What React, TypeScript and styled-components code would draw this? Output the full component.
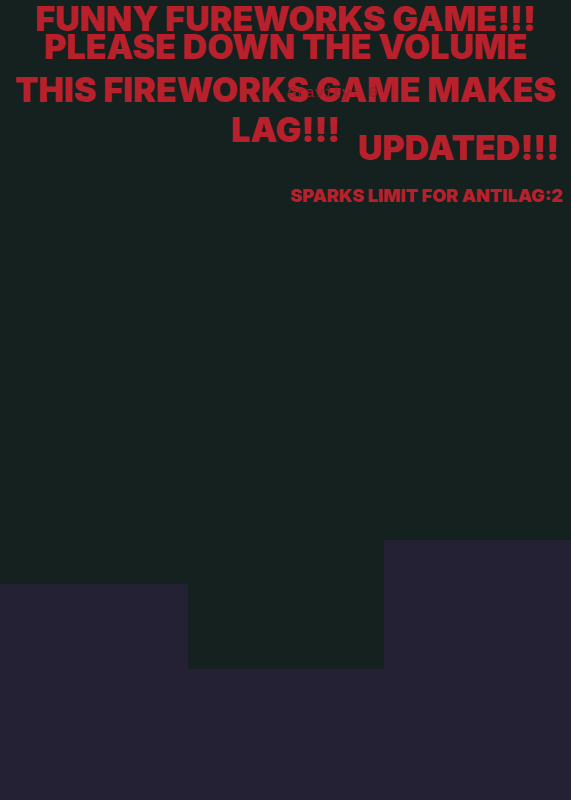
import React from "react";
import styled, { createGlobalStyle } from "styled-components";

const GlobalStyle = createGlobalStyle`
  *, *::before, *::after { box-sizing: border-box; }
  body { margin: 0; background: #15211f; }
`;

const Scene = styled.main`
  display: flex;
  flex-direction: column;
  min-height: 100vh;
  overflow: hidden;
  background: #15211f;
  color: #b8202b;
  font-family: Inter, "Liberation Sans", sans-serif;
  font-weight: 900;
`;

const Messages = styled.header`
  position: relative;
  display: flex;
  flex-direction: column;
  padding-top: 5px;
`;

const Heading = styled.h1`
  margin: 0;
  font-size: 34px;
  font-weight: 900;
  line-height: 28px;
  text-align: center;
`;

const Warning = styled.p`
  margin: 9px 0 0;
  font-size: 34px;
  line-height: 40px;
  text-align: center;
`;

const Updated = styled.p`
  margin: -16px 12px 0 0;
  font-size: 34px;
  line-height: 28px;
  text-align: right;
`;

const SparksLimit = styled.p`
  margin: 24px 8px 0 0;
  font-size: 18px;
  line-height: 20px;
  text-align: right;
`;

const Gravity = styled.output`
  position: absolute;
  top: 85px;
  left: 50%;
  padding-left: 2px;
  font-family: "Liberation Mono", monospace;
  font-size: 15px;
  font-weight: 400;
  line-height: 18px;
  white-space: pre;
  color: #942027;
`;

const Skyline = styled.div`
  display: grid;
  grid-template-columns: 188fr 196fr 187fr;
  align-items: end;
  margin-top: auto;
`;

const Building = styled.div<{ $height: number }>`
  height: ${({ $height }) => $height}px;
  background: #252135;
`;

const buildings = [216, 131, 260];

export default function App() {
  return (
    <>
      <GlobalStyle />
      <Scene>
        <Messages>
          <Heading>
            FUNNY FUREWORKS GAME!!!
            <br />
            PLEASE DOWN THE VOLUME
          </Heading>
          <Warning>THIS FIREWORKS GAME MAKES LAG!!!</Warning>
          <Updated>UPDATED!!!</Updated>
          <SparksLimit>SPARKS LIMIT FOR ANTILAG:2</SparksLimit>
          <Gravity>Gravity: 0</Gravity>
        </Messages>
        <Skyline>
          {buildings.map((height, index) => (
            <Building key={index} $height={height} />
          ))}
        </Skyline>
      </Scene>
    </>
  );
}
